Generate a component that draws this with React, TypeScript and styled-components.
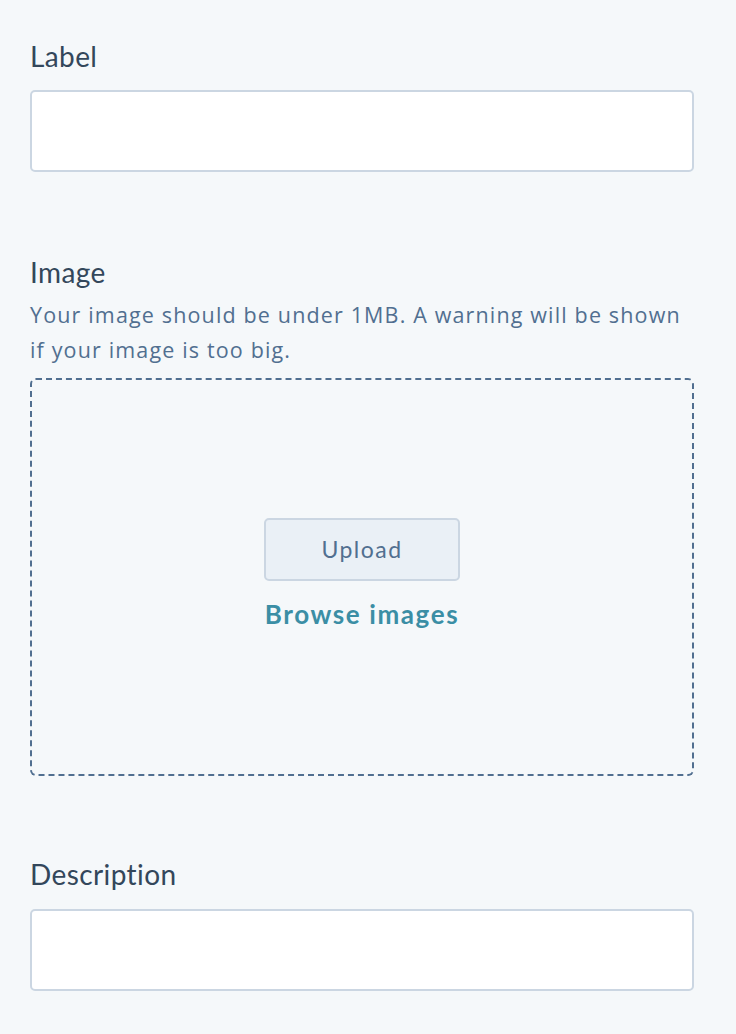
import React from 'react';
import styled, { createGlobalStyle } from 'styled-components';

const GlobalStyle = createGlobalStyle`
  html, body {
    margin: 0;
    padding: 0;
    background: #f5f8fa;
  }
  body {
    font-family: 'Lato', 'Noto Sans', sans-serif;
    -webkit-font-smoothing: antialiased;
  }
`;

const Page = styled.div`
  width: 664px;
  padding: 38px 30px 40px 30px;
  display: flex;
  flex-direction: column;
`;

const Field = styled.div<{ $gapTop?: number }>`
  display: flex;
  flex-direction: column;
  margin-top: ${(p) => p.$gapTop || 0}px;
`;

const FieldLabel = styled.label`
  font-size: 28px;
  line-height: 36px;
  letter-spacing: 0.4px;
  color: #33475b;
  font-weight: 400;
`;

const HelpText = styled.p`
  margin: 7px 0 0 0;
  font-family: 'Open Sans', 'Lato', sans-serif;
  font-size: 21.5px;
  line-height: 35px;
  letter-spacing: 1.15px;
  color: #516f90;
`;

const TextInput = styled.input<{ $gap?: number }>`
  box-sizing: border-box;
  width: 100%;
  height: 82px;
  margin-top: ${(p) => p.$gap || 16}px;
  border: 2px solid #cbd6e2;
  border-radius: 5px;
  background: #ffffff;
  outline: none;
  font-family: inherit;
  font-size: 22px;
  padding: 0 20px;
`;

const DropZone = styled.div`
  box-sizing: border-box;
  margin-top: 11px;
  height: 398px;
  border: 2px dashed #516f90;
  border-radius: 6px;
  display: flex;
  flex-direction: column;
  align-items: center;
  justify-content: center;
  padding-bottom: 7px;
`;

const UploadButton = styled.button`
  box-sizing: border-box;
  width: 196px;
  height: 63px;
  background: #eaf0f6;
  border: 2px solid #cbd6e2;
  border-radius: 5px;
  color: #516f90;
  font-family: inherit;
  font-size: 23px;
  letter-spacing: 1.5px;
  cursor: pointer;
`;

const BrowseLink = styled.a`
  margin-top: 17px;
  font-size: 26px;
  line-height: 32px;
  font-weight: 700;
  letter-spacing: 1.6px;
  color: #3b8ea5;
  cursor: pointer;
  text-decoration: none;
`;

export default function App() {
  return (
    <>
      <GlobalStyle />
      <Page>
        <Field>
          <FieldLabel>Label</FieldLabel>
          <TextInput type="text" />
        </Field>

        <Field $gapTop={82}>
          <FieldLabel>Image</FieldLabel>
          <HelpText>
            Your image should be under 1MB. A warning will be shown if your image is too big.
          </HelpText>
          <DropZone>
            <UploadButton type="button">Upload</UploadButton>
            <BrowseLink>Browse images</BrowseLink>
          </DropZone>
        </Field>

        <Field $gapTop={80}>
          <FieldLabel>Description</FieldLabel>
          <TextInput type="text" $gap={17} />
        </Field>
      </Page>
    </>
  );
}
